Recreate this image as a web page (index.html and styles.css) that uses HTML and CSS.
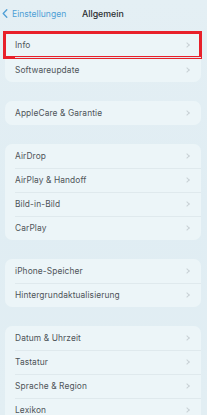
FILE: index.html
```html
<!DOCTYPE html>
<html lang="de">
<head>
<meta charset="utf-8">
<link rel="stylesheet" href="styles.css">
</head>
<body>
<div class="screen">
  <header class="nav">
    <a class="back">
      <svg class="back-icon" width="6" height="9" viewBox="0 0 6 9"><path d="M4.8 0.8 L1.2 4.5 L4.8 8.2" fill="none" stroke="#4f9fd6" stroke-width="1.3" stroke-linecap="round" stroke-linejoin="round"/></svg>
      <span>Einstellungen</span>
    </a>
    <span class="title">Allgemein</span>
  </header>

  <section class="card card-tall">
    <div class="row highlight"><span>Info</span><i class="chev"></i></div>
    <div class="row"><span>Softwareupdate</span><i class="chev"></i></div>
  </section>

  <section class="card">
    <div class="row"><span>AppleCare &amp; Garantie</span><i class="chev"></i></div>
  </section>

  <section class="card">
    <div class="row"><span>AirDrop</span><i class="chev"></i></div>
    <div class="row"><span>AirPlay &amp; Handoff</span><i class="chev"></i></div>
    <div class="row"><span>Bild-in-Bild</span><i class="chev"></i></div>
    <div class="row"><span>CarPlay</span><i class="chev"></i></div>
  </section>

  <section class="card">
    <div class="row"><span>iPhone-Speicher</span><i class="chev"></i></div>
    <div class="row"><span>Hintergrundaktualisierung</span><i class="chev"></i></div>
  </section>

  <section class="card">
    <div class="row"><span>Datum &amp; Uhrzeit</span><i class="chev"></i></div>
    <div class="row"><span>Tastatur</span><i class="chev"></i></div>
    <div class="row"><span>Sprache &amp; Region</span><i class="chev"></i></div>
    <div class="row"><span>Lexikon</span><i class="chev"></i></div>
  </section>
</div>
</body>
</html>
```

FILE: styles.css
```css
* { box-sizing: border-box; }
html, body {
  margin: 0;
  padding: 0;
  width: 207px;
  height: 415px;
  overflow: hidden;
}
body {
  font-family: "Inter", "Liberation Sans", sans-serif;
  background: linear-gradient(180deg, #e4eff4 0%, #e0edf3 50%, #e2eef3 100%);
  color: #4e5458;
}
.screen {
  display: flex;
  flex-direction: column;
  gap: 19px;
  padding: 0 6px 0 5px;
}
.nav {
  height: 26px;
  display: flex;
  align-items: center;
  padding-top: 1px;
  margin: 0 -6px -13px -5px;
  padding-left: 2px;
}
.back {
  display: flex;
  align-items: center;
  gap: 4px;
  color: #4f9fd6;
  font-size: 8.6px;
  width: 80px;
}
.back-icon { display: block; }
.title {
  color: #2a2d30;
  font-size: 8.8px;
  font-weight: 500;
}
.card {
  background: #ecf5f8;
  border-radius: 7px;
  display: flex;
  flex-direction: column;
}
.row {
  position: relative;
  height: 24px;
  display: flex;
  align-items: center;
  justify-content: space-between;
  padding: 0 10px 0 10px;
  font-size: 8.4px;
  letter-spacing: 0.1px;
}
.card-tall .row { height: 25px; }
.row + .row::before {
  content: "";
  position: absolute;
  left: 10px;
  right: 0;
  top: 0;
  height: 1px;
  background: #dfe9ed;
}
.card-tall .row.highlight {
  outline: 3px solid #e8202a;
  outline-offset: -2px;
  margin: 0 0 0 -1px;
  padding-left: 11px;
  height: 26px;
  margin-bottom: -1px;
}
.chev {
  width: 4px;
  height: 4px;
  border-right: 1px solid #c8d1d5;
  border-top: 1px solid #c8d1d5;
  transform: rotate(45deg);
  margin-right: 2px;
}
```
